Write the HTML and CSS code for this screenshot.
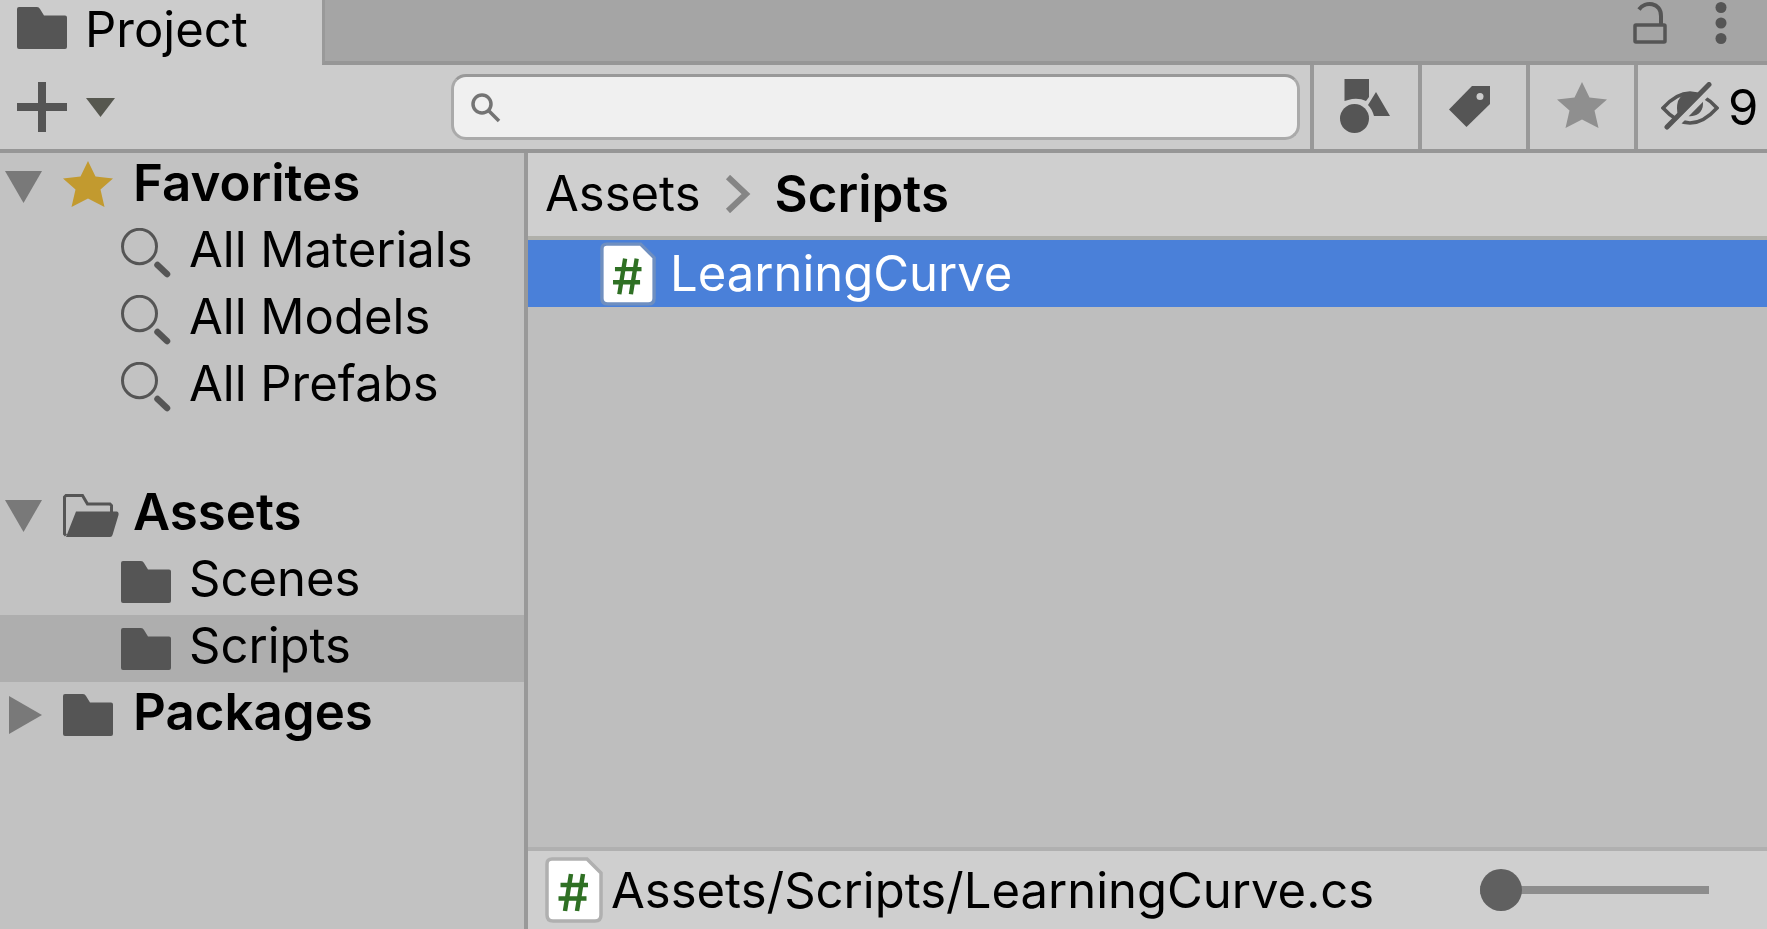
FILE: index.html
```html
<!DOCTYPE html>
<html lang="en">
<head>
<meta charset="utf-8">
<title>Project</title>
<link rel="stylesheet" href="styles.css">
</head>
<body>
<svg class="defs" aria-hidden="true">
  <symbol id="folder" viewBox="0 0 50 42"><path d="M2 0H20Q22 0 23 2L27 8.500H48Q50 8.500 50 10.500V40Q50 42 48 42H2Q0 42 0 40V2Q0 0 2 0Z" fill="#555"/></symbol>
  <symbol id="search" viewBox="0 0 50 50"><ellipse cx="18.500" cy="18.500" rx="17" ry="17.200" fill="none" stroke="#555" stroke-width="3"/><path d="M36.500 37L46 46" stroke="#555" stroke-width="6.500" stroke-linecap="round"/></symbol>
  <symbol id="down" viewBox="0 0 38 32"><path d="M0 1H37L18.500 33Z" fill="#797979"/></symbol>
  <symbol id="star" viewBox="0 0 50 50"><path d="M25 0L32.500 15.500L50 17.500L37.500 28.500L41.500 46L25 37.500L8.500 46L12.500 28.500L0 17.500L17.500 15.500Z" fill="currentColor"/></symbol>
  <symbol id="script" viewBox="0 0 58 66">
    <path d="M7 2H42L56 16V58Q56 64 50 64H8Q2 64 2 58V7Q2 2 7 2Z" fill="#fff" stroke="currentColor" stroke-width="3.500"/>
    <path d="M26 17L20 54M38 17L32 54M15.500 28H43M13.500 41.500H41.500" stroke="#2f7024" stroke-width="4.500" fill="none"/>
  </symbol>
</svg>

<div class="window">
  <header class="tabs">
    <div class="tab"><svg class="icon"><use href="#folder"/></svg><span>Project</span></div>
    <div class="tab-actions">
      <button class="plain" aria-label="Lock"><svg width="34" height="44" viewBox="0 0 34 44"><rect x="2" y="24" width="30" height="17" rx="1" fill="none" stroke="#555" stroke-width="3.500"/><path d="M6 8.500C12 0 28 1 28 15V24" fill="none" stroke="#555" stroke-width="4"/></svg></button>
      <button class="plain" aria-label="Menu"><svg width="12" height="44" viewBox="0 0 12 44"><g fill="#555"><circle cx="6" cy="6.500" r="5.500"/><circle cx="6" cy="22" r="5.500"/><circle cx="6" cy="37.500" r="5.500"/></g></svg></button>
    </div>
  </header>

  <div class="toolbar">
    <button class="plain add" aria-label="Create">
      <svg width="50" height="50" viewBox="0 0 50 50"><path d="M25 0V50M0 25H50" stroke="#555" stroke-width="8"/></svg>
      <svg width="30" height="19" viewBox="0 0 30 19"><path d="M0 0H29L14.500 19Z" fill="#56574f"/></svg>
    </button>
    <label class="search">
      <svg width="30" height="30" viewBox="0 0 30 30"><circle cx="11" cy="11" r="9" fill="none" stroke="#747474" stroke-width="3.500"/><path d="M17.500 17.500L28 28" stroke="#747474" stroke-width="3.500"/></svg>
      <input type="search" aria-label="Search assets">
    </label>
    <div class="filters">
      <button class="filter" aria-label="Search by type"><svg width="52" height="56" viewBox="0 0 52 56"><path d="M4.500 0H29V18L26 22Q20 19 12 20L4.500 22Z" fill="#555"/><circle cx="14.500" cy="39.500" r="14.500" fill="#555"/><path d="M36 13L50 37H34Q32 30 28 26Z" fill="#555"/></svg></button>
      <button class="filter" aria-label="Search by label"><svg width="50" height="42" viewBox="0 0 50 42"><path d="M23 0H41V18L17.500 41L0 23.500Z" fill="#555"/><circle cx="31" cy="10.500" r="3.500" fill="#ccc"/></svg></button>
      <button class="filter pale" aria-label="Save search"><svg class="icon"><use href="#star"/></svg></button>
      <button class="filter hidden-count"><svg width="58" height="52" viewBox="0 0 58 52"><path d="M2 26Q29 -4 56 26Q29 56 2 26Z" fill="none" stroke="#555" stroke-width="3.500"/><path d="M17 19Q20 11 30 10.500Q42 12 42 22C42 32 33 35 27 34L17 33Q15 26 17 19Z" fill="#555"/><path d="M9.500 48.500L52 5.500" stroke="#ccc" stroke-width="6"/><path d="M6 45L48 2.500" stroke="#555" stroke-width="5" stroke-linecap="round"/></svg><span>9</span></button>
    </div>
  </div>

  <div class="body">
    <nav class="sidebar">
      <ul>
        <li><button class="row root"><svg class="arrow"><use href="#down"/></svg><svg class="icon gold"><use href="#star"/></svg><span class="label">Favorites</span></button>
          <ul>
            <li><button class="row child"><svg class="icon"><use href="#search"/></svg><span class="label">All Materials</span></button></li>
            <li><button class="row child"><svg class="icon"><use href="#search"/></svg><span class="label">All Models</span></button></li>
            <li><button class="row child"><svg class="icon"><use href="#search"/></svg><span class="label">All Prefabs</span></button></li>
          </ul>
        </li>
        <li><button class="row root"><svg class="arrow"><use href="#down"/></svg><svg class="icon open" viewBox="0 0 56 43"><path d="M3 41.500L1.500 40V3L3 1.500H19.500L24.500 10H47L48.500 11.500V19" fill="none" stroke="#555" stroke-width="3"/><path d="M13 17.500H54Q56 18 55.500 21L49.500 41Q49 43 47 43H3Z" fill="#555"/></svg><span class="label">Assets</span></button>
          <ul>
            <li><button class="row child"><svg class="icon"><use href="#folder"/></svg><span class="label">Scenes</span></button></li>
            <li><button class="row child selected"><svg class="icon"><use href="#folder"/></svg><span class="label">Scripts</span></button></li>
          </ul>
        </li>
        <li><button class="row root"><svg class="arrow" viewBox="0 0 38 38"><path d="M4 0L37 19L4 38Z" fill="#797979"/></svg><svg class="icon"><use href="#folder"/></svg><span class="label">Packages</span></button></li>
      </ul>
    </nav>

    <main class="content">
      <nav class="crumbs" aria-label="Breadcrumb">
        <a href="#assets">Assets</a>
        <svg width="26" height="38" viewBox="0 0 26 38"><path d="M3 2L21 19L3 36" fill="none" stroke="#858585" stroke-width="6"/></svg>
        <a href="#scripts" class="current">Scripts</a>
      </nav>
      <div class="files">
        <button class="file"><svg class="script-icon"><use href="#script"/></svg><span>LearningCurve</span></button>
      </div>
      <footer class="status">
        <svg class="script-icon"><use href="#script"/></svg>
        <span class="path">Assets/Scripts/LearningCurve.cs</span>
        <input class="zoom" type="range" min="0" max="100" value="0" aria-label="Icon size">
      </footer>
    </main>
  </div>
</div>
</body>
</html>
```

FILE: styles.css
```css
* { box-sizing: border-box; }
body {
  margin: 0;
  font: 400 49px/60px Inter, "Liberation Sans", sans-serif;
  color: #000;
}
button, input { font: inherit; color: inherit; }
button { border: 0; background: none; padding: 0; text-align: left; cursor: pointer; }
ul { list-style: none; margin: 0; padding: 0; }
svg { display: block; flex: none; }
.defs { position: absolute; width: 0; height: 0; }

.window { display: flex; flex-direction: column; height: 100vh; overflow: hidden; background: #ccc; }

.tabs { display: flex; flex: none; height: 65px; background: #ccc; }
.tab { display: flex; align-items: flex-start; gap: 18px; width: 322px; padding-left: 17px; }
.tab .icon { margin-top: 3px; }
.tab-actions {
  display: flex; flex: 1; justify-content: flex-end; align-items: flex-start; gap: 48px;
  padding: 1px 40px 0 0; background: #a5a5a5;
  border-left: 3px solid #999; border-bottom: 4px solid #969696;
}
.plain { display: flex; align-items: center; }

.toolbar { display: flex; flex: none; align-items: center; height: 88px; border-bottom: 4px solid #969696; }
.add { gap: 19px; padding-left: 17px; width: 451px; }
.search {
  display: flex; flex: 1; align-items: center; height: 66px; padding: 2px 0 0 17px; gap: 12px;
  background: #f0f0f0; border: 3px solid #aaa; border-top-color: #999; border-radius: 15px;
}
.search input { flex: 1; min-width: 0; height: 56px; border: 0; outline: 0; background: none; }
.filters { display: flex; height: 100%; margin-left: 10px; }
.filter {
  display: flex; align-items: center; justify-content: center; width: 108px;
  border-left: 4px solid #999;
}
.pale { color: #8f8f8f; }
.hidden-count { justify-content: flex-start; width: 133px; padding: 2px 0 0 23px; gap: 9px; }

.icon { width: 50px; height: 50px; }
.open { width: 56px; height: 43px; margin-right: -6px; }
.arrow { width: 38px; height: 38px; overflow: visible; }
.gold { color: #c29a2f; }
.label { padding-bottom: 6px; white-space: nowrap; }

.body { display: flex; flex: 1; min-height: 0; }
.sidebar { flex: none; width: 528px; background: #c2c2c2; border-right: 4px solid #999; }
.sidebar > ul > li:nth-child(2) { margin-top: 62px; }
.row { display: flex; align-items: center; width: 100%; height: 67px; }
.root { height: 66px; padding-left: 5px; gap: 20px; font-size: 51px; font-weight: 600; }
.child { padding-left: 121px; gap: 18px; }
.selected { background: #aeaeae; }

.content { display: flex; flex: 1; flex-direction: column; min-width: 0; background: #bebebe; }
.crumbs {
  display: flex; flex: none; align-items: center; gap: 24px; height: 87px; padding: 0 0 2px 17px;
  background: #cfcfcf; border-bottom: 4px solid #b0b0aa;
}
.crumbs a { color: inherit; text-decoration: none; }
.crumbs .current { font-size: 51px; font-weight: 600; }
.files { flex: 1; }
.file {
  display: flex; align-items: center; gap: 14px; width: 100%; height: 67px; padding-left: 72px;
  background: #4a80d9; color: #fff;
}
.script-icon { width: 56px; height: 64px; color: #6f8fc0; }
.status {
  display: flex; flex: none; align-items: center; height: 82px; padding: 0 58px 0 17px; gap: 8px;
  background: #cfcfcf; border-top: 4px solid #b0b0b0;
}
.status .script-icon { color: #b0b0b0; width: 58px; height: 66px; }
.path { flex: 1; padding-top: 2px; white-space: nowrap; }
.zoom { appearance: none; width: 229px; height: 42px; margin: 0; background: none; }
.zoom::-webkit-slider-runnable-track {
  height: 42px;
  background: linear-gradient(#8d8d8d, #8d8d8d) center / 100% 8px no-repeat;
}
.zoom::-webkit-slider-thumb { appearance: none; width: 42px; height: 42px; border-radius: 50%; background: #606060; }
```
